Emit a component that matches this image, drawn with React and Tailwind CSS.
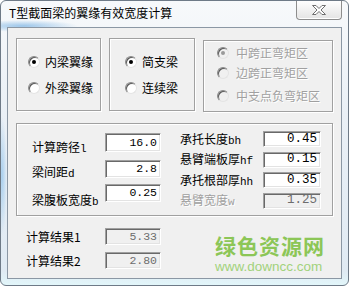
const mono = "font-['Liberation_Mono',monospace]"

function Radio({ checked, disabled }) {
    return (
        <span className={`w-[12px] h-[12px] shrink-0 rounded-full border border-t-[#8a8a8a] border-l-[#8a8a8a] border-r-[#e4e4e4] border-b-[#e4e4e4] shadow-[inset_1px_1px_0_#5a5a5a] flex items-center justify-center ${disabled ? 'bg-[#f0f0f0]' : 'bg-white'}`}>
            {checked && <span className={`w-[4px] h-[4px] rounded-full ${disabled ? 'bg-[#9a9a9a]' : 'bg-black'}`}/>}
        </span>
    )
}

function Option({ label, checked, disabled, gap }) {
    return (
        <div className={`h-[20px] flex items-center ${gap}`}>
            <Radio checked={checked} disabled={disabled}/>
            <span className={disabled ? 'text-[#a0a0a0] [text-shadow:1px_1px_0_#fff]' : 'text-black'}>{label}</span>
        </div>
    )
}

function Edit({ value, size, disabled, wide }) {
    return (
        <div className={`${size} shrink-0 border border-t-[#a0a0a0] border-l-[#a0a0a0] border-r-white border-b-white shadow-[inset_1px_1px_0_#696969,inset_-1px_-1px_0_#e3e3e3] flex items-center justify-end pr-[3px] ${mono} ${wide ? 'text-[12.5px]' : 'text-[11.5px]'} ${disabled ? 'bg-[#f0f0f0] text-[#6d6d6d]' : 'bg-white text-black'}`}>
            {value}
        </div>
    )
}

function Label({ text, suffix, disabled }) {
    return (
        <span className={`leading-[16px] whitespace-nowrap ${disabled ? 'text-[#a0a0a0] [text-shadow:1px_1px_0_#fff]' : 'text-black'}`}>
            {text}<span className={`${mono} text-[11px]`}>{suffix}</span>
        </span>
    )
}

const group = 'border border-[#a0a0a0] shadow-[inset_1px_1px_0_#ffffff,1px_1px_0_#ffffff]'

export default function App() {
    const right = [
        { text: '承托长度', suffix: 'bh', value: '0.45' },
        { text: '悬臂端板厚', suffix: 'hf', value: '0.15' },
        { text: '承托根部厚', suffix: 'hh', value: '0.35' },
        { text: '悬臂宽度', suffix: 'w', value: '1.25', disabled: true },
    ]

    return (
        <div className="w-[349px] h-[286px] overflow-hidden bg-white font-['Noto_Sans_CJK_SC','Noto_Sans',sans-serif]">
            <div className="w-[349px] h-[286px] rounded-[6px] border border-[#6e7a87] flex flex-col [background-image:radial-gradient(ellipse_55px_6px_at_22px_25px,#9cc6ea,transparent),radial-gradient(ellipse_5px_60px_at_1px_175px,#a9cfee,transparent),linear-gradient(180deg,#f7f9fb,#eaf0f6_40%,#e0eaf3_95%,#e2f6fa)]">
                {/* title bar */}
                <div className="h-[26px] flex justify-between pl-[8px] pr-[6px]">
                    <div className="pt-[4px] text-[12px] leading-[16px] text-black">T型截面梁的翼缘有效宽度计算</div>
                    <div className="w-[46px] h-[19px] rounded-b-[4px] border border-t-0 border-[#8d8d8d] bg-gradient-to-b from-white to-[#e4e4e4] shadow-[inset_0_-1px_0_#ffffff] flex items-center justify-center">
                        <svg width="14" height="10" viewBox="0 0 14 10">
                            <path d="M0.5 0.5H4L7 3.5L10 0.5H13.5L9 5L13.5 9.5H10L7 6.5L4 9.5H0.5L5 5Z" fill="#ffffff" stroke="#6f6f6f" strokeWidth="1"/>
                        </svg>
                    </div>
                </div>

                {/* client */}
                <div className="flex-1 mx-[6px] mb-[6px] border border-[#8b97a4] bg-[#f0f0f0] flex flex-col text-[12px]">
                    <div className="flex items-start pl-[8px] pt-[10px]">
                        <div className={`w-[85px] h-[73px] ${group} flex flex-col pl-[11px] pt-[13px] gap-[6px]`}>
                            <Option label="内梁翼缘" checked gap="gap-[5px]"/>
                            <Option label="外梁翼缘" gap="gap-[5px]"/>
                        </div>
                        <div className={`ml-[8px] w-[86px] h-[73px] ${group} flex flex-col pl-[15px] pt-[13px] gap-[6px]`}>
                            <Option label="简支梁" checked gap="gap-[5px]"/>
                            <Option label="连续梁" gap="gap-[5px]"/>
                        </div>
                        <div className={`ml-[8px] mt-[2px] w-[130px] h-[72px] ${group} flex flex-col pl-[13px] pt-[2px]`}>
                            <Option label="中跨正弯矩区" checked disabled gap="gap-[7px]"/>
                            <Option label="边跨正弯矩区" disabled gap="gap-[7px]"/>
                            <div className="mt-[3px]">
                                <Option label="中支点负弯矩区" disabled gap="gap-[7px]"/>
                            </div>
                        </div>
                    </div>

                    <div className={`ml-[8px] mt-[11px] w-[317px] h-[93px] ${group} flex`}>
                        <div className="flex pl-[15px]">
                            <div className="w-[73px] flex flex-col pt-[15px] gap-[7px]">
                                <Label text="计算跨径" suffix="l"/>
                                <Label text="梁间距" suffix="d"/>
                                <div className="mt-[1.5px]"><Label text="梁腹板宽度" suffix="b"/></div>
                            </div>
                            <div className="flex flex-col pt-[9px]">
                                <Edit value="16.0" size="w-[56px] h-[19px]"/>
                                <div className="mt-[8px]"><Edit value="2.8" size="w-[56px] h-[18px]"/></div>
                                <div className="mt-[6px]"><Edit value="0.25" size="w-[56px] h-[18px]"/></div>
                            </div>
                        </div>
                        <div className="ml-[19px] pt-[7px] flex flex-col gap-[4.5px]">
                            {right.map(r => (
                                <div key={r.suffix} className="h-[16px] flex items-center">
                                    <div className="w-[83px]"><Label text={r.text} suffix={r.suffix} disabled={r.disabled}/></div>
                                    <Edit value={r.value} size="w-[58px] h-[16px]" disabled={r.disabled} wide/>
                                </div>
                            ))}
                        </div>
                    </div>

                    <div className="flex pl-[18px] mt-[12px]">
                        <div className="flex flex-col gap-[7px]">
                            {[['计算结果1', '5.33'], ['计算结果2', '2.80']].map(([l, v]) => (
                                <div key={l} className="h-[17px] flex items-center">
                                    <span className="w-[79px] leading-[16px] text-black">{l}</span>
                                    <Edit value={v} size="w-[56px] h-[17px]" disabled/>
                                </div>
                            ))}
                        </div>
                        <div className="ml-[54px] pt-[6px] flex flex-col">
                            <span className="text-[21px] leading-[22px] font-bold tracking-[1px] text-[#8cc657]">绿色资源网</span>
                            <span className="mt-[4px] text-[13.5px] leading-[14px] font-['Liberation_Sans',sans-serif] text-[#a2d27c]">www.downcc.com</span>
                        </div>
                    </div>
                </div>
            </div>
        </div>
    )
}
